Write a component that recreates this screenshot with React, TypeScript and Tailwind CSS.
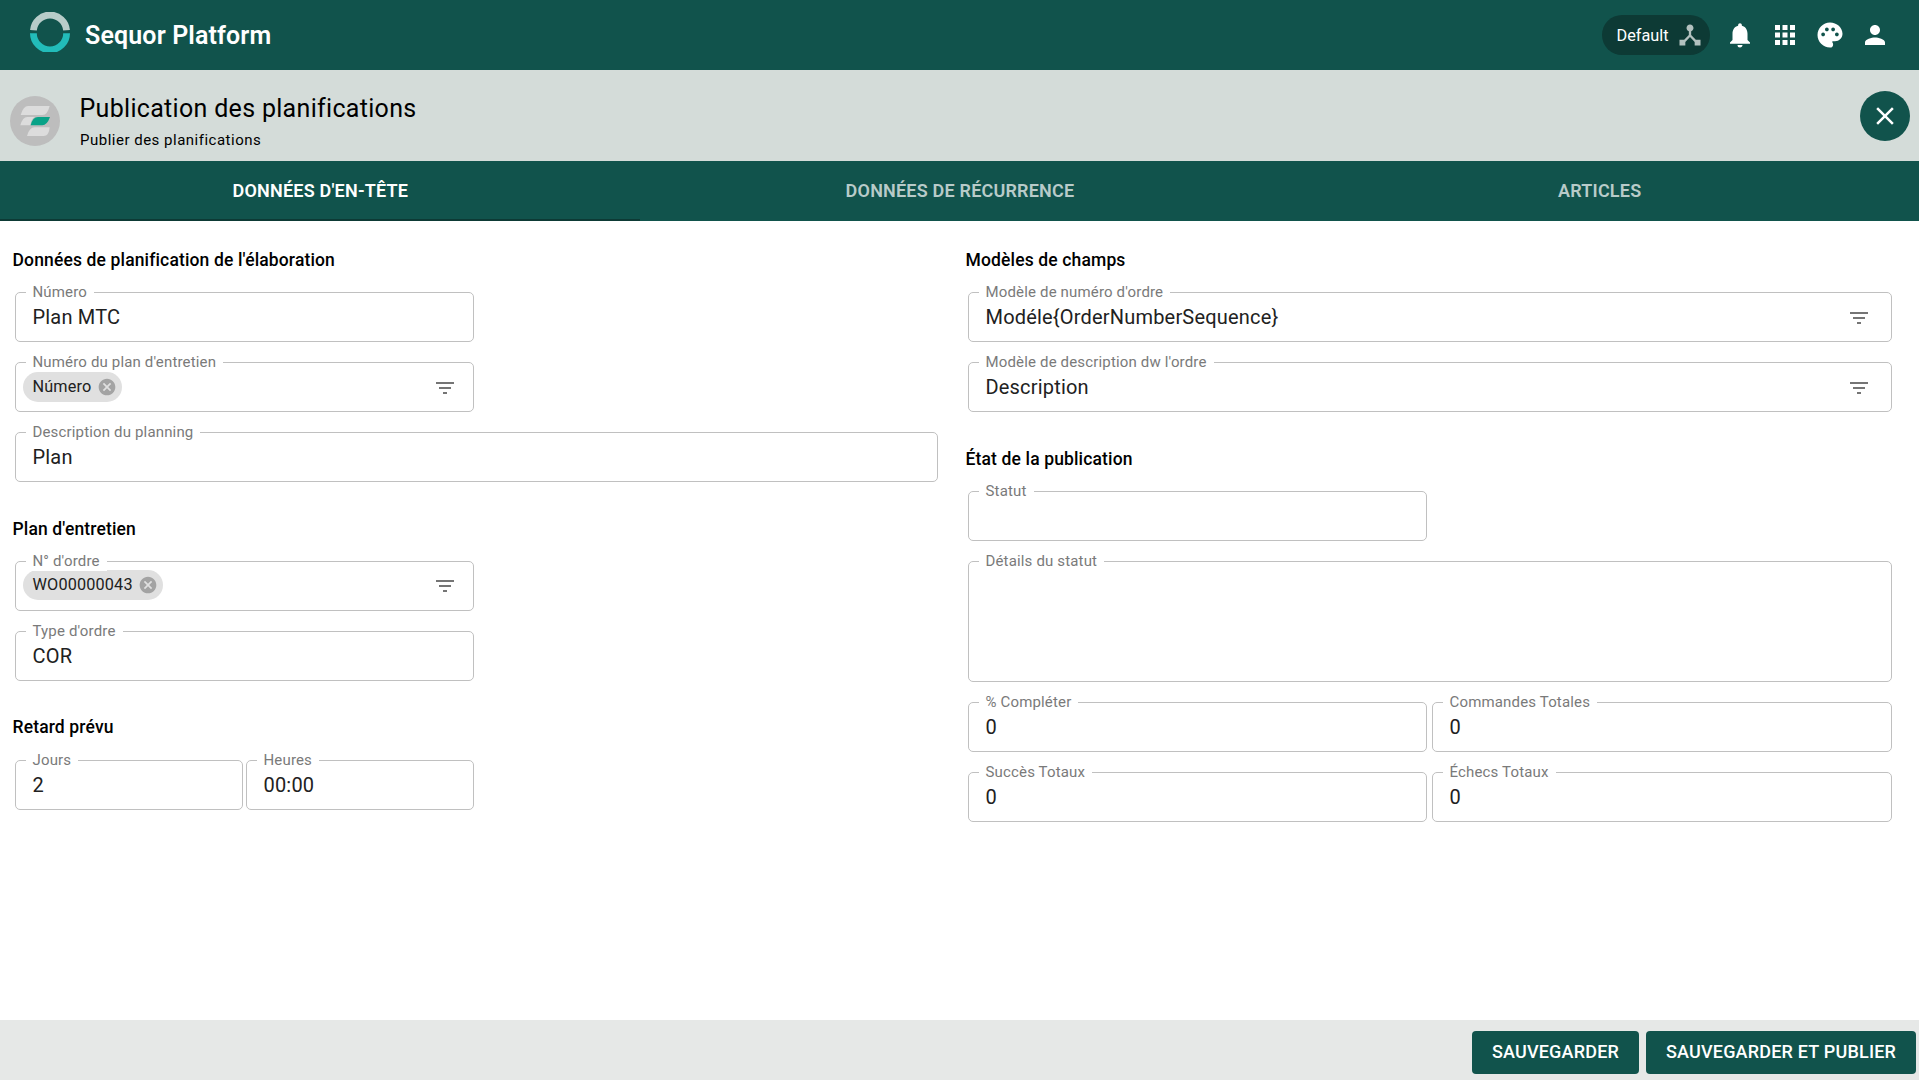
import type { ReactNode } from "react";
import {
  MdApps,
  MdCancel,
  MdClose,
  MdDeviceHub,
  MdFilterList,
  MdNotifications,
  MdPalette,
  MdPerson,
} from "react-icons/md";

function RingLogo() {
  return (
    <svg className="h-10 w-10" viewBox="0 0 40 40" fill="none" strokeWidth="6.8">
      <path d="M3.45 18.3a16.6 16.6 0 0 1 33.1 0" stroke="#b8ccc9" />
      <path d="M3.4 21.2a16.6 16.6 0 0 0 33.2 0" stroke="#22bcb9" />
    </svg>
  );
}

function ModuleLogo() {
  return (
    <svg className="h-[50px] w-[50px]" viewBox="0 0 150 150">
      <circle cx="75" cy="75" r="75" fill="#bdbdbd" />
      <path d="M32 57Q40 30 54 30H119Q112 57 98 57Z" fill="#dcdcdc" />
      <path d="M31 88Q38 63 52 63H74Q64 68 61 88Z" fill="#dcdcdc" />
      <path d="M62 88Q68 63 84 63H120Q111 88 97 88Z" fill="#08a287" />
      <path d="M51 120Q58 94 74 94H119Q117 120 101 120Z" fill="#dcdcdc" />
    </svg>
  );
}

type FieldProps = {
  label: string;
  value?: string;
  size?: string;
  end?: ReactNode;
  children?: ReactNode;
};

function Field({ label, value, size = "h-[50px]", end, children }: FieldProps) {
  return (
    <div className={`relative flex min-w-0 items-center rounded-[5px] border border-[#c0c0c0] ${size}`}>
      <span className="absolute -top-[11px] left-[10px] bg-white pr-[7px] pl-[6.5px] text-[15px] leading-[20px] tracking-[0.16px] whitespace-nowrap text-[#7a7a7a]">
        {label}
      </span>
      {children ?? <span className="pl-[16.5px] text-[20px] leading-[24px] tracking-[0.19px] text-[#212121]">{value}</span>}
      {end}
    </div>
  );
}

function Chip({ text }: { text: string }) {
  return (
    <span className="ml-[7px] flex h-[30px] items-center gap-[5.5px] rounded-full bg-[#e0e0e0] pr-[5px] pl-[9.5px] text-[16.25px] leading-[20px] tracking-[0.15px] text-[#212121]">
      <span className="-mt-px">{text}</span>
      <MdCancel className="h-5 w-5 text-[#a3a3a3]" />
    </span>
  );
}

function Heading({ children }: { children: ReactNode }) {
  return <h2 className="ml-[0.5px] h-[26px] text-[17.5px] leading-[26px] font-medium tracking-[0.14px] text-black">{children}</h2>;
}

const half = "w-[459px] h-[50px]";

export default function App() {
  return (
    <div className="flex h-[1080px] w-full flex-col overflow-hidden bg-white font-['Roboto',sans-serif]">
      <header className="flex h-[70px] shrink-0 items-center bg-[#11534c] pr-[29px] pl-[30px] text-white">
        <div className="mb-[6px]">
          <RingLogo />
        </div>
        <h1 className="mt-[2px] ml-[15px] text-[25px] leading-[32px] font-semibold tracking-[0.14px]">Sequor Platform</h1>
        <div className="ml-auto flex items-center gap-[15px]">
          <div className="flex h-10 w-[108px] items-center rounded-full bg-[#0d3a35] pl-[14.5px] text-[16.25px] leading-[20px]">
            <span className="mt-[2px]">Default</span>
            <MdDeviceHub className="ml-[7px] h-[28px] w-[28px] text-[#b3c1bf]" />
          </div>
          <MdNotifications className="h-[30px] w-[30px]" />
          <MdApps className="h-[30px] w-[30px]" />
          <MdPalette className="h-[30px] w-[30px]" />
          <MdPerson className="h-[30px] w-[30px]" />
        </div>
      </header>

      <section className="flex h-[91px] shrink-0 bg-[#d4dcd9] pr-[9px] pl-[10px]">
        <div className="mt-[26px]">
          <ModuleLogo />
        </div>
        <div className="mt-[23px] ml-[19px] text-black">
          <p className="ml-[0.5px] text-[25px] leading-[32px] font-[450] tracking-[0.31px]">Publication des planifications</p>
          <p className="mt-[5px] ml-px text-[15px] leading-[20px] tracking-[0.5px]">Publier des planifications</p>
        </div>
        <button className="mt-[21px] ml-auto flex h-[50px] w-[50px] items-center justify-center rounded-full bg-[#11534c] text-white">
          <MdClose className="h-[30px] w-[30px]" />
        </button>
      </section>

      <nav className="grid h-[60px] shrink-0 grid-cols-3 bg-[#11534c] text-[18px] font-semibold tracking-[0.2px] text-white">
        <button className="border-b-2 border-[#0d3a35] pl-px">DONNÉES D'EN-TÊTE</button>
        <button className="border-b-2 border-transparent pl-px text-[#b8cbc9]">DONNÉES DE RÉCURRENCE</button>
        <button className="border-b-2 border-transparent pl-px text-[#b8cbc9]">ARTICLES</button>
      </nav>

      <main className="flex flex-1 pt-[26px] pl-[12px]">
        <div className="w-[953px]">
          <Heading>Données de planification de l'élaboration</Heading>
          <div className="mt-[19px] ml-[3px] flex flex-col gap-5">
            <Field label="Número" value="Plan MTC" size={half} />
            <Field
              label="Numéro du plan d'entretien"
              size={half}
              end={<MdFilterList className="mt-px mr-[16px] ml-auto h-6 w-6 text-[#757575]" />}
            >
              <Chip text="Número" />
            </Field>
            <Field label="Description du planning" value="Plan" size="h-[50px] w-[923px]" />
          </div>
          <div className="mt-[34px]">
            <Heading>Plan d'entretien</Heading>
          </div>
          <div className="mt-[19px] ml-[3px] flex flex-col gap-5">
            <Field
              label="N° d'ordre"
              size={half}
              end={<MdFilterList className="mr-[16px] ml-auto h-6 w-6 text-[#757575]" />}
            >
              <div className="-mt-[2px]">
                <Chip text="WO00000043" />
              </div>
            </Field>
            <Field label="Type d'ordre" value="COR" size={half} />
          </div>
          <div className="mt-[33px]">
            <Heading>Retard prévu</Heading>
          </div>
          <div className="mt-[20px] ml-[3px] grid w-[459px] grid-cols-2 gap-[3px]">
            <Field label="Jours" value="2" />
            <Field label="Heures" value="00:00" />
          </div>
        </div>

        <div className="w-[927px]">
          <Heading>Modèles de champs</Heading>
          <div className="mt-[19px] ml-[3px] flex flex-col gap-5">
            <Field
              label="Modèle de numéro d'ordre"
              value="Modéle{OrderNumberSequence}"
              end={<MdFilterList className="mt-px mr-[20px] ml-auto h-6 w-6 text-[#757575]" />}
            />
            <Field
              label="Modèle de description dw l'ordre"
              value="Description"
              end={<MdFilterList className="mt-px mr-[20px] ml-auto h-6 w-6 text-[#757575]" />}
            />
          </div>
          <div className="mt-[34px]">
            <Heading>État de la publication</Heading>
          </div>
          <div className="mt-[19px] ml-[3px] flex flex-col gap-5">
            <Field label="Statut" size={half} />
            <Field label="Détails du statut" size="h-[121px]" />
            <div className="grid grid-cols-[459px_1fr] gap-x-[5px] gap-y-5">
              <Field label="% Compléter" value="0" />
              <Field label="Commandes Totales" value="0" />
              <Field label="Succès Totaux" value="0" />
              <Field label="Échecs Totaux" value="0" />
            </div>
          </div>
        </div>
      </main>

      <footer className="flex h-[60px] shrink-0 justify-end gap-[7px] bg-[#e6e8e7] pt-[11px] pr-[3px] text-[18px] font-medium tracking-[0.2px] text-white">
        <button className="h-[43px] w-[167px] rounded-[4px] bg-[#11534c] pb-[2px]">SAUVEGARDER</button>
        <button className="h-[43px] w-[270px] rounded-[4px] bg-[#11534c] pb-[2px]">SAUVEGARDER ET PUBLIER</button>
      </footer>
    </div>
  );
}
